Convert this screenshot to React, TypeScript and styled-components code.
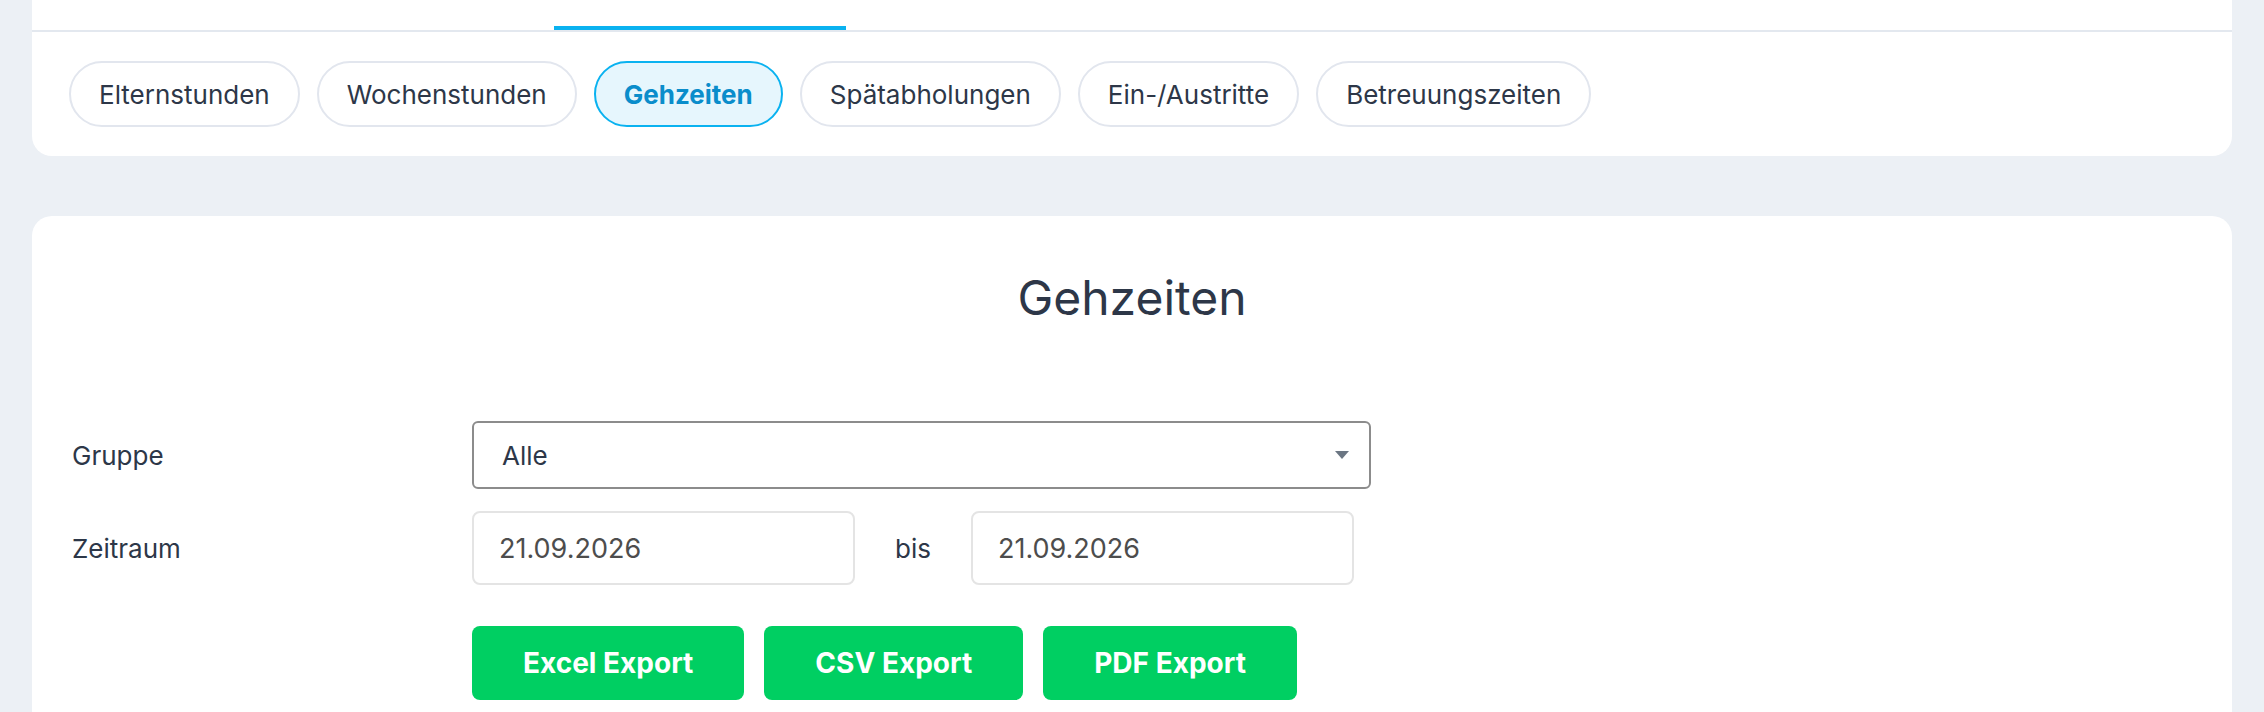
import React from "react";
import styled, { createGlobalStyle } from "styled-components";

const GlobalStyle = createGlobalStyle`
  html, body {
    margin: 0;
    padding: 0;
    background: #ecf0f5;
    font-family: Inter, "Noto Sans", Roboto, sans-serif;
    color: #2d3748;
  }
  * { box-sizing: border-box; }
`;

const Page = styled.div`
  display: flex;
  flex-direction: column;
  gap: 60px;
  padding: 0 32px;
  height: 712px;
  overflow: hidden;
`;

const NavCard = styled.section`
  background: #ffffff;
  border-radius: 0 0 20px 20px;
`;

const TabStrip = styled.div`
  display: flex;
  height: 32px;
  border-bottom: 2px solid #e3e8ef;
`;

const TabSlot = styled.div<{ $width: number; $active?: boolean }>`
  width: ${(p) => p.$width}px;
  height: 30px;
  border-bottom: 4px solid ${(p) => (p.$active ? "#0ab2f0" : "transparent")};
`;

const PillRow = styled.nav`
  display: flex;
  gap: 17px;
  padding: 29px 37px;
`;

const Pill = styled.button<{ $active?: boolean }>`
  height: 66px;
  padding: 0 28px;
  border-radius: 33px;
  border: 2px solid ${(p) => (p.$active ? "#0ab2f0" : "#e2e6ee")};
  background: ${(p) => (p.$active ? "#e6f6fd" : "#ffffff")};
  color: ${(p) => (p.$active ? "#0a8dcb" : "#2d3748")};
  font-family: inherit;
  font-size: 26px;
  font-weight: ${(p) => (p.$active ? 700 : 400)};
  cursor: pointer;
`;

const ReportCard = styled.section`
  background: #ffffff;
  border-radius: 20px;
  padding: 55px 40px 40px;
  flex: 1;
`;

const Title = styled.h1`
  margin: 0 0 97px;
  text-align: center;
  font-size: 48px;
  font-weight: 400;
  line-height: 53px;
  color: #2d3748;
`;

const Form = styled.div`
  display: grid;
  grid-template-columns: 400px 1fr;
  row-gap: 22px;
  align-items: center;
`;

const Label = styled.label`
  font-size: 26px;
  color: #2d3748;
`;

const SelectBox = styled.div`
  width: 899px;
  height: 68px;
  display: flex;
  align-items: center;
  justify-content: space-between;
  padding: 0 20px 0 28px;
  border: 2px solid #8c8c8c;
  border-radius: 6px;
  font-size: 26px;
  color: #2d3748;
`;

const Caret = styled.svg`
  width: 14px;
  height: 8px;
  fill: #6b7683;
`;

const DateRow = styled.div`
  display: flex;
  align-items: center;
  gap: 40px;
`;

const DateInput = styled.div`
  width: 383px;
  height: 74px;
  display: flex;
  align-items: center;
  padding: 0 25px;
  border: 2px solid #e4e4e4;
  border-radius: 8px;
  font-size: 27px;
  color: #4d4d4d;
`;

const Between = styled.span`
  font-size: 26px;
  color: #2d3748;
`;

const ButtonRow = styled.div`
  grid-column: 2;
  display: flex;
  gap: 20px;
  margin-top: 19px;
`;

const ExportButton = styled.button`
  height: 74px;
  padding: 0 51px;
  border: none;
  border-radius: 8px;
  background: #00cf62;
  color: #ffffff;
  font-family: inherit;
  font-size: 28px;
  font-weight: 700;
  cursor: pointer;
`;

const sections = [
  "Elternstunden",
  "Wochenstunden",
  "Gehzeiten",
  "Spätabholungen",
  "Ein-/Austritte",
  "Betreuungszeiten",
];

export default function App() {
  const active = "Gehzeiten";
  return (
    <>
      <GlobalStyle />
      <Page>
        <NavCard>
          <TabStrip>
            <TabSlot $width={522} />
            <TabSlot $width={292} $active />
          </TabStrip>
          <PillRow>
            {sections.map((s) => (
              <Pill key={s} $active={s === active}>
                {s}
              </Pill>
            ))}
          </PillRow>
        </NavCard>

        <ReportCard>
          <Title>Gehzeiten</Title>
          <Form>
            <Label>Gruppe</Label>
            <SelectBox>
              <span>Alle</span>
              <Caret viewBox="0 0 14 8">
                <path d="M0 0h14L7 8z" />
              </Caret>
            </SelectBox>

            <Label>Zeitraum</Label>
            <DateRow>
              <DateInput>21.09.2026</DateInput>
              <Between>bis</Between>
              <DateInput>21.09.2026</DateInput>
            </DateRow>

            <ButtonRow>
              <ExportButton>Excel Export</ExportButton>
              <ExportButton>CSV Export</ExportButton>
              <ExportButton>PDF Export</ExportButton>
            </ButtonRow>
          </Form>
        </ReportCard>
      </Page>
    </>
  );
}
